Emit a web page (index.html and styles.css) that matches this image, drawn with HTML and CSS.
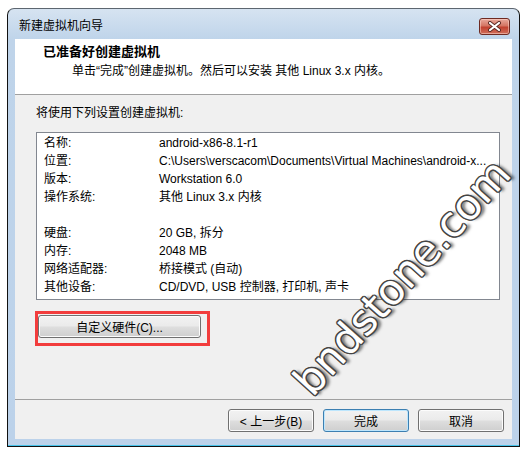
FILE: index.html
```html
<!DOCTYPE html>
<html>
<head>
<meta charset="utf-8" />
<title>新建虚拟机向导</title>
<link rel="stylesheet" href="styles.css">
</head>
<body>
<div class="window">
  <div class="titlebar">
    <span class="title">新建虚拟机向导</span>
    <button type="button" class="btn-close" aria-label="关闭">
      <svg width="15" height="11" viewBox="0 0 15 11">
        <path d="M3 2 L12 9 M12 2 L3 9" stroke="#5a2a24" stroke-width="4" stroke-linecap="round" fill="none"/>
        <path d="M3 2 L12 9 M12 2 L3 9" stroke="#fff" stroke-width="2.2" stroke-linecap="round" fill="none"/>
      </svg>
    </button>
  </div>

  <div class="client">
    <div class="header">
      <div class="header-title">已准备好创建虚拟机</div>
      <div class="header-sub">单击“完成”创建虚拟机。然后可以安装 其他 Linux 3.x 内核。</div>
    </div>

    <div class="content">
      <div class="intro">将使用下列设置创建虚拟机:</div>

      <div class="summary">
        <span>名称:</span><span>android-x86-8.1-r1</span>
        <span>位置:</span><span>C:\Users\verscacom\Documents\Virtual Machines\android-x...</span>
        <span>版本:</span><span>Workstation 6.0</span>
        <span>操作系统:</span><span>其他 Linux 3.x 内核</span>
        <span class="blank"></span><span class="blank"></span>
        <span>硬盘:</span><span>20 GB, 拆分</span>
        <span>内存:</span><span>2048 MB</span>
        <span>网络适配器:</span><span>桥接模式 (自动)</span>
        <span>其他设备:</span><span>CD/DVD, USB 控制器, 打印机, 声卡</span>
      </div>

      <div class="highlight">
        <button type="button" class="btn btn-custom">自定义硬件(C)...</button>
      </div>
    </div>

    <div class="footer">
      <button type="button" class="btn">&lt; 上一步(B)</button>
      <button type="button" class="btn btn-default">完成</button>
      <button type="button" class="btn">取消</button>
    </div>
  </div>

  <div class="watermark">bndstone.com</div>
</div>
</body>
</html>
```

FILE: styles.css
```css
body {
  margin: 0;
  background: #fff;
  font-family: "Liberation Sans", "Noto Sans CJK SC", sans-serif;
  font-size: 12px;
  color: #000;
}

.window {
  position: relative;
  box-sizing: border-box;
  width: 513px;
  height: 439px;
  margin: 8px 0 0 7px;
  padding: 0 7px 7px;
  border: 1px solid #111;
  border-top-color: #5d6670;
  border-radius: 7px 7px 0 0;
  background: linear-gradient(#d6e3f1, #bfd4ea 30px, #bcd2ea);
  box-shadow: inset 0 -1px 0 #47c3ea;
  overflow: hidden;
}

.titlebar {
  height: 30px;
  box-sizing: border-box;
  padding: 4px 2px 0 4px;
  display: flex;
  align-items: center;
  justify-content: space-between;
}

.title {
  line-height: 18px;
}

.btn-close {
  width: 31px;
  height: 17px;
  padding: 0;
  display: flex;
  align-items: center;
  justify-content: center;
  border: 1px solid #6e2a22;
  border-radius: 3px;
  background: linear-gradient(#e9a99c, #d47563 45%, #c2412f 55%, #d0705c);
  box-shadow: inset 0 0 0 1px rgba(255, 220, 210, 0.5);
}

.client {
  height: 400px;
  display: flex;
  flex-direction: column;
  background: #f0f0f0;
}

.header {
  box-sizing: border-box;
  height: 56px;
  padding: 5px 0 0 28px;
  background: #fff;
  border-bottom: 1px solid #a0a0a0;
}

.header-title {
  font-size: 13px;
  font-weight: bold;
  line-height: 16px;
}

.header-sub {
  margin-top: 2px;
  padding-left: 29px;
  line-height: 18px;
}

.content {
  flex: 1;
  padding: 9px 12px 0 21px;
}

.intro {
  line-height: 18px;
}

.summary {
  box-sizing: border-box;
  width: 464px;
  height: 168px;
  margin-top: 10px;
  padding: 1px 0 0 7px;
  background: #fff;
  border: 1px solid #828790;
  display: grid;
  grid-template-columns: 115px 1fr;
  grid-auto-rows: 18px;
  line-height: 18px;
  white-space: nowrap;
}

.highlight {
  box-sizing: border-box;
  width: 175px;
  height: 35px;
  margin: 11px 0 0 -1px;
  padding: 1px 0 0 0;
  border: 3px solid #f23d3d;
}

.btn {
  box-sizing: border-box;
  width: 86px;
  height: 23px;
  padding: 0;
  border: 1px solid #707070;
  border-radius: 3px;
  background: linear-gradient(#f2f2f2, #ebebeb 45%, #dddddd 55%, #cfcfcf);
  box-shadow: inset 0 0 0 1px #fcfcfc;
  font: inherit;
  color: #000;
}

.btn-custom {
  width: 163px;
}

.btn-default {
  border-color: #3c7fb1;
  box-shadow: inset 0 0 0 1px #bde6fd;
}

.footer {
  box-sizing: border-box;
  height: 40px;
  padding: 9px 8px 0 0;
  border-top: 1px solid #a0a0a0;
  display: flex;
  justify-content: flex-end;
  gap: 9px;
}

.watermark {
  position: absolute;
  left: 394px;
  top: 268px;
  transform: translate(-50%, -50%) rotate(-48deg);
  font-family: "DejaVu Sans", sans-serif;
  font-size: 42px;
  color: #fff;
  white-space: nowrap;
  pointer-events: none;
  text-shadow: -1px -1px 0 #444, 1px -1px 0 #444, -1px 1px 0 #444, 1px 1px 0 #444,
    0 -1.5px 0 #444, 0 1.5px 0 #444, -1.5px 0 0 #444, 1.5px 0 0 #444,
    3px 3px 3px rgba(0, 0, 0, 0.55);
}
```
